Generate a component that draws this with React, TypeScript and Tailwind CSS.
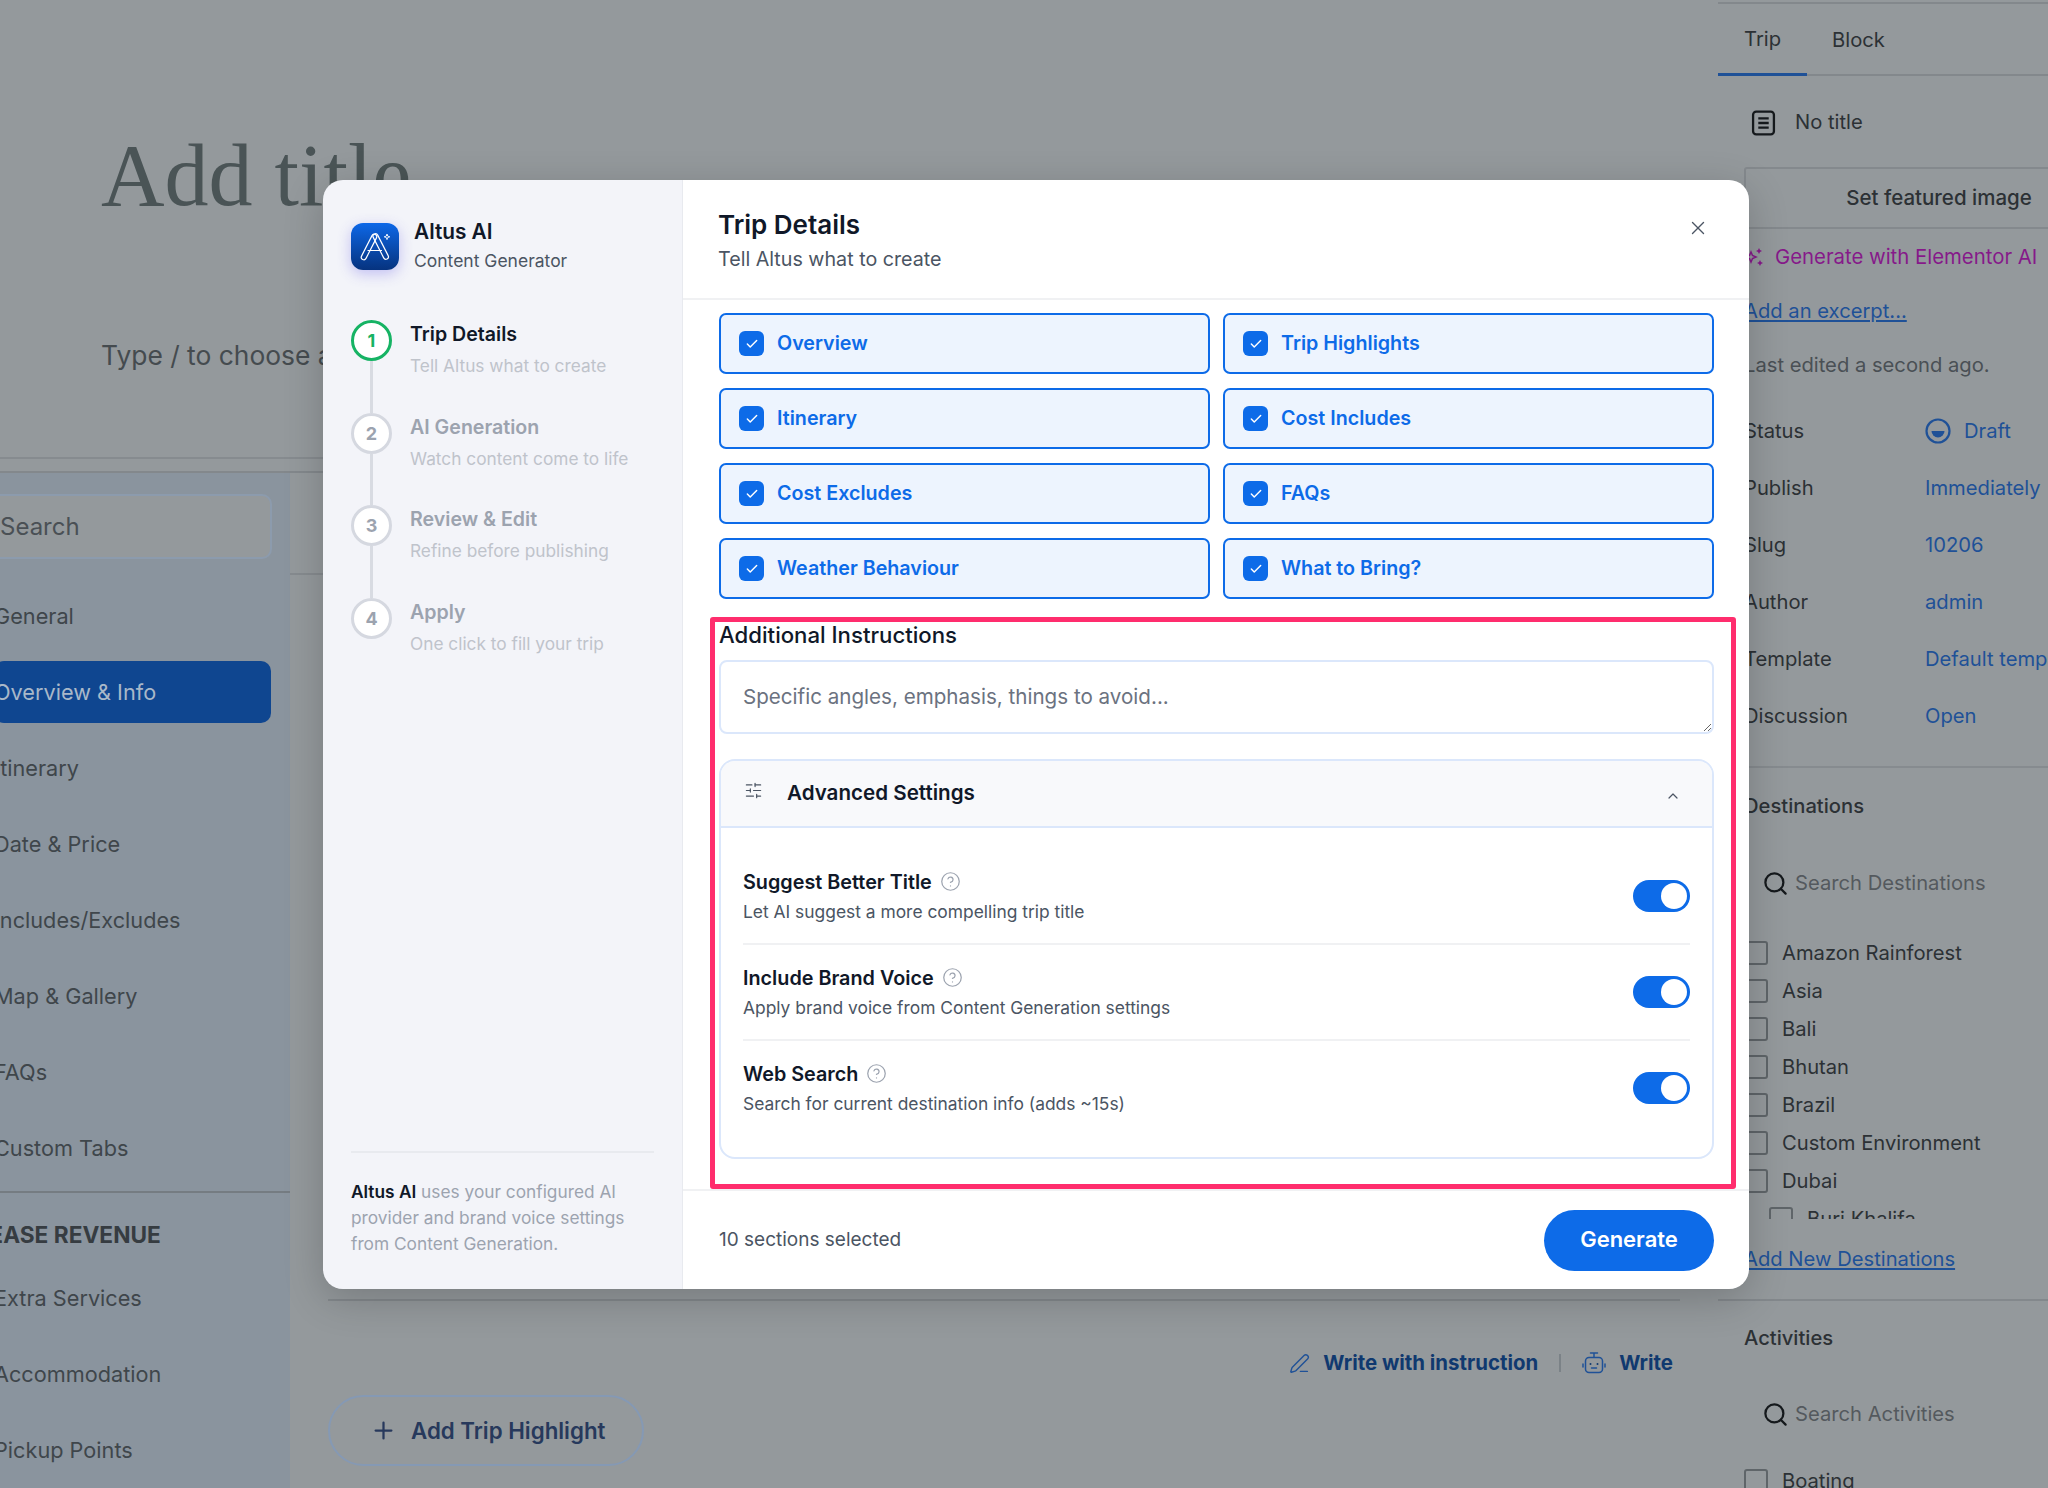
import { Check, ChevronUp, CircleHelp, PenLine, Plus, Search, SlidersHorizontal, X } from "lucide-react";

const navTop = ["General", "Overview & Info", "Itinerary", "Date & Price", "Includes/Excludes", "Map & Gallery", "FAQs", "Custom Tabs"];
const navBottom = ["Extra Services", "Accommodation", "Pickup Points"];
const meta = [
  ["Status", "Draft"],
  ["Publish", "Immediately"],
  ["Slug", "10206"],
  ["Author", "admin"],
  ["Template", "Default template"],
  ["Discussion", "Open"],
];
const destinations = ["Amazon Rainforest", "Asia", "Bali", "Bhutan", "Brazil", "Custom Environment", "Dubai"];
const steps = [
  ["Trip Details", "Tell Altus what to create"],
  ["AI Generation", "Watch content come to life"],
  ["Review & Edit", "Refine before publishing"],
  ["Apply", "One click to fill your trip"],
];
const sections = ["Overview", "Trip Highlights", "Itinerary", "Cost Includes", "Cost Excludes", "FAQs", "Weather Behaviour", "What to Bring?"];
const settings = [
  ["Suggest Better Title", "Let AI suggest a more compelling trip title"],
  ["Include Brand Voice", "Apply brand voice from Content Generation settings"],
  ["Web Search", "Search for current destination info (adds ~15s)"],
];

// Altus logo mark: outlined A with a small sparkle
const AltusLogo = () => (
  <svg viewBox="0 0 48 47" className="h-full w-full" fill="none" stroke="white" strokeWidth="1.2">
    <rect x="15.5" y="10" width="5" height="28" rx="2.5" transform="rotate(27 18 24)" />
    <rect x="27.2" y="9.5" width="5" height="28" rx="2.5" transform="rotate(-27 29.7 23.5)" />
    <path d="M16.5 27.5h14.5" />
    <path d="M36 11l.7 2.1 2.1.7-2.1.7-.7 2.1-.7-2.1-2.1-.7 2.1-.7z" strokeWidth="0.9" />
  </svg>
);

const RobotIcon = () => (
  <svg width="24" height="24" viewBox="0 0 24 24" fill="none" stroke="#1f5197" strokeWidth="1.5" strokeLinecap="round">
    <path d="M8.5 2h7M12 2v4" />
    <rect x="3.5" y="6.5" width="17" height="15" rx="3.5" />
    <path d="M1 13v3M23 13v3M9.5 17h5" />
    <circle cx="8.5" cy="13" r="1" fill="#10396f" stroke="none" />
    <circle cx="15.5" cy="13" r="1" fill="#10396f" stroke="none" />
  </svg>
);

const ElementorSparkle = () => (
  <svg width="20" height="20" viewBox="0 0 20 20" fill="none" className="shrink-0">
    <path d="M6 5l1.5 3.5L11 10l-3.5 1.5L6 15l-1.5-3.5L1 10l3.5-1.5z" stroke="#86198a" strokeWidth="1.5" />
    <path d="M14 1l1 2 2 1-2 1-1 2-1-2-2-1 2-1zM15 13l1 2 2 1-2 1-1 2-1-2-2-1 2-1z" fill="#86198a" />
  </svg>
);

const PageBackground = () => (
  <div className="flex h-full w-full text-[#2c3135]">
    <div className="flex w-[1718px] flex-col">
      <div className="h-[459px] border-b-2 border-[#868b8f] pl-[101px]">
        <div className="pt-[126px] font-['Liberation_Serif',serif] text-[88px] leading-[100px] text-[#4a5456]">Add title</div>
        <div className="mt-[110px] text-[26.4px] leading-[38px] text-[#454b4f]">Type / to choose a block</div>
      </div>
      <div className="h-[12px]" />
      <div className="flex flex-1 border-t-2 border-[#83888c]">
        <div className="w-[290px] overflow-hidden bg-[#8a949e] text-[21.7px] text-[#3f464b]">
          <div className="mt-[21px] ml-[-20px] flex h-[65px] w-[292px] items-center rounded-[10px] border-2 border-[#8c9bad] bg-[#94999c] pl-[18px] text-[24px] text-[#4a5055]">
            Search
          </div>
          <div className="mt-[26px] flex flex-col gap-[14px]">
            {navTop.map((item) => (
              <div
                key={item}
                className={`ml-[-6px] flex h-[62px] w-[277px] items-center rounded-[10px] ${item === "Overview & Info" ? "bg-[#0f4690] text-[#a9b8c9]" : ""}`}
              >
                {item}
              </div>
            ))}
          </div>
          <div className="mt-[12px] border-t-2 border-[#757c82]" />
          <div className="mt-[27px] ml-[-66px] text-[22.7px] leading-[30px] font-bold whitespace-nowrap text-[#363c41]">INCREASE REVENUE</div>
          <div className="mt-[17px] flex flex-col gap-[14px]">
            {navBottom.map((item) => (
              <div key={item} className="ml-[-6px] flex h-[62px] items-center">{item}</div>
            ))}
          </div>
        </div>
        <div className="flex-1 px-[38px]">
          <div className="mx-[-38px] h-[102px] border-b-2 border-[#868b8f]" />
          <div className="mt-[724px] border-b-2 border-[#83888c]" />
          <div className="mt-[44px] flex h-[36px] items-center justify-end gap-[13px] pr-[7px] text-[20.4px] font-bold text-[#10396f]">
            <PenLine size={21} strokeWidth={1.6} className="text-[#1f5197]" />
            <span>Write with instruction</span>
            <span className="mx-[8px] h-[18px] w-[2px] bg-[#7b8287]" />
            <RobotIcon />
            <span>Write</span>
          </div>
          <div className="mt-[14px] flex h-[71px] w-[316px] items-center gap-[14px] rounded-full border-2 border-[#8599b4] pl-[40px] text-[22.3px] font-semibold text-[#27395c]">
            <Plus size={27} strokeWidth={2} />
            Add Trip Highlight
          </div>
        </div>
      </div>
    </div>

    <div className="w-[330px] text-[20.2px]">
      <div className="mt-[2px] border-t-2 border-[#83888c]" />
      <div className="flex h-[72px] border-b-2 border-[#83888c]">
        <div className="mb-[-2px] flex items-center border-b-[3px] border-[#1f5197] px-[26px] pt-[2px]">Trip</div>
        <div className="flex items-center pt-[2px] pl-[25px]">Block</div>
      </div>
      <div className="px-[26px]">
        <div className="flex h-[91px] items-center gap-[19px] pt-[2px] pl-[7px]">
          <svg width="25" height="28" viewBox="0 0 24 26" fill="none" stroke="#15191c" strokeWidth="2.2">
            <rect x="2" y="2" width="20" height="22" rx="3" />
            <path d="M7 8.5h10M7 13h10M7 17.5h10" />
          </svg>
          No title
        </div>
        <div className="flex h-[62px] w-[390px] items-center justify-center rounded-[3px] border-2 border-[#84898d] text-[20.5px] font-medium">
          Set featured image
        </div>
        <div className="flex h-[56px] items-center gap-[10px] pl-[1px] text-[20.35px] whitespace-nowrap text-[#86198a]">
          <ElementorSparkle />
          Generate with Elementor AI
        </div>
        <div className="flex h-[52px] items-center text-[#1f5197] underline">Add an excerpt...</div>
        <div className="flex h-[56px] items-center text-[#4a5055]">Last edited a second ago.</div>
        <div className="mt-[10px]">
          {meta.map(([label, value]) => (
            <div key={label} className="flex h-[57px] items-center">
              <span className="w-[181px] shrink-0">{label}</span>
              <span className="flex items-center gap-[13px] whitespace-nowrap text-[#1f5197]">
                {label === "Status" && (
                  <svg width="26" height="26" viewBox="0 0 26 26" fill="none">
                    <circle cx="13" cy="13" r="11.5" stroke="#1f5197" strokeWidth="2.2" />
                    <path d="M6.5 13h13a6.5 6.5 0 0 1-13 0z" fill="#1f5197" />
                  </svg>
                )}
                {value}
              </span>
            </div>
          ))}
        </div>
      </div>
      <div className="mt-[21px] border-t-2 border-[#868b8f]" />
      <div className="px-[26px]">
        <div className="flex h-[76px] items-center font-medium">Destinations</div>
        <div className="flex h-[78px] items-center gap-[6px] pl-[18px] text-[#54595e]">
          <Search size={27} strokeWidth={2} className="text-[#15191c]" />
          Search Destinations
        </div>
        <div className="mt-[12px] h-[285px] overflow-hidden">
          {destinations.map((d) => (
            <div key={d} className="flex h-[38px] items-center gap-[14px]">
              <span className="h-[24px] w-[24px] rounded-[3px] border-2 border-[#5f6569]" />
              {d}
            </div>
          ))}
          <div className="flex h-[38px] items-center gap-[14px] pl-[25px]">
            <span className="h-[24px] w-[24px] rounded-[3px] border-2 border-[#5f6569]" />
            Burj Khalifa
          </div>
        </div>
        <div className="flex h-[80px] items-center text-[#1f5197] underline">Add New Destinations</div>
      </div>
      <div className="border-t-2 border-[#83888c]" />
      <div className="px-[26px]">
        <div className="flex h-[75px] items-center font-medium">Activities</div>
        <div className="flex h-[76px] items-center gap-[6px] pl-[18px] text-[#54595e]">
          <Search size={27} strokeWidth={2} className="text-[#15191c]" />
          Search Activities
        </div>
        <div className="flex h-[38px] items-center gap-[14px] pt-[20px]">
          <span className="h-[24px] w-[24px] rounded-[3px] border-2 border-[#5f6569]" />
          Boating
        </div>
      </div>
    </div>
  </div>
);

const Toggle = () => (
  <div className="flex h-[32px] w-[57px] shrink-0 items-center justify-end rounded-full bg-[#0d6be8] pr-[3px]">
    <div className="h-[26px] w-[26px] rounded-full bg-white" />
  </div>
);

const LeftPane = () => (
  <aside className="flex w-[360px] shrink-0 flex-col border-r border-[#e8eaef] bg-[#f3f4f9] px-[28px]">
    <div className="flex gap-[15px] pt-[43px]">
      <div className="h-[47px] w-[48px] shrink-0 rounded-[12px] bg-gradient-to-b from-[#0d68e8] to-[#06337f] shadow-[0_4px_14px_rgba(80,70,230,0.3)]">
        <AltusLogo />
      </div>
      <div>
        <div className="mt-[-1px] text-[20.8px] leading-[20px] font-semibold text-[#101828]">Altus AI</div>
        <div className="mt-[8px] text-[17.5px] leading-[21px] text-[#4b5563]">Content Generator</div>
      </div>
    </div>
    <div className="mt-[49px]">
      {steps.map(([title, sub], i) => (
        <div key={title} className="flex h-[92.6px] gap-[18px]">
          <div className="flex w-[41px] shrink-0 flex-col items-center">
            <div
              className={`flex h-[41px] w-[41px] shrink-0 items-center justify-center rounded-full border-[3px] bg-white text-[18px] font-bold ${i === 0 ? "border-[#16b364] text-[#16b364]" : "border-[#d5d8e0] text-[#9ca3af]"}`}
            >
              {i + 1}
            </div>
            {i < 3 && <div className="w-[3px] flex-1 bg-[#d8dbe2]" />}
          </div>
          <div>
            <div className={`text-[19.6px] leading-[28px] font-semibold ${i === 0 ? "text-[#101828]" : "text-[#9ca3af]"}`}>{title}</div>
            <div className="mt-[6px] text-[17.3px] leading-[24px] text-[#bfc3cb]">{sub}</div>
          </div>
        </div>
      ))}
    </div>
    <div className="mt-auto border-t-2 border-[#e8eaef] pt-[26px] pb-[32px] text-[17.3px] leading-[26px] text-[#9ca3af]">
      <span className="font-semibold text-[#101828]">Altus AI</span> uses your configured AI provider and brand voice settings from Content Generation.
    </div>
  </aside>
);

const RightPane = () => (
  <section className="flex min-w-0 flex-1 flex-col bg-white">
    <header className="flex h-[120px] shrink-0 justify-between border-b-2 border-[#f0f1f3] pr-[35px] pl-[36px]">
      <div className="pt-[27px]">
        <div className="ml-[-1px] text-[26px] leading-[36px] font-semibold text-[#101828]">Trip Details</div>
        <div className="mt-[2px] ml-[-1px] text-[19.7px] leading-[28px] text-[#4b5563]">Tell Altus what to create</div>
      </div>
      <X size={22} strokeWidth={1.5} className="mt-[37px] mr-[5px] text-[#4b5563]" />
    </header>
    <div className="pr-[35px] pl-[36px]">
      <div className="mt-[13px] grid grid-cols-2 gap-x-[13px] gap-y-[14px]">
        {sections.map((s) => (
          <div key={s} className="flex h-[61px] items-center gap-[13px] rounded-[7px] border-[2.5px] border-[#0d6be8] bg-[#edf4fe] pl-[18px] text-[19.7px] font-semibold text-[#0d6be8]">
            <span className="flex h-[25px] w-[25px] items-center justify-center rounded-[6px] bg-[#0d6be8]">
              <Check size={14} strokeWidth={2.5} className="text-white" />
            </span>
            {s}
          </div>
        ))}
      </div>
      <div className="mt-[23px] text-[22.2px] leading-[26px] font-medium text-[#101828]">Additional Instructions</div>
      <textarea
        readOnly
        placeholder="Specific angles, emphasis, things to avoid..."
        className="mt-[12px] block h-[74px] w-full rounded-[8px] border-2 border-[#dbe7fb] px-[22px] py-[21px] text-[20.6px] leading-[28px] outline-none placeholder:text-[#6b7280]"
      />
      <div className="mt-[25px] overflow-hidden rounded-[16px] border-2 border-[#dbe7fb]">
        <div className="flex h-[67px] items-center border-b-2 border-[#dbe7fb] bg-[#f8f9fb] pr-[31px] pl-[23px]">
          <SlidersHorizontal size={19} strokeWidth={1.5} className="mt-[-6px] text-[#4b5563]" />
          <span className="ml-[24px] text-[20.6px] font-semibold text-[#101828]">Advanced Settings</span>
          <ChevronUp size={16} strokeWidth={1.8} className="mt-[4px] ml-auto text-[#4b5563]" />
        </div>
        <div className="px-[22px] pt-[21px] pb-[22px]">
          {settings.map(([title, sub], i) => (
            <div key={title} className={`flex items-center justify-between ${i < 2 ? "h-[96px] border-b-2 border-[#f0f1f3]" : "h-[94px]"}`}>
              <div>
                <div className="flex items-center gap-[8px] text-[19.8px] leading-[26px] font-semibold text-[#101828]">
                  {title}
                  <CircleHelp size={21} strokeWidth={1.4} className="text-[#9ca3af]" />
                </div>
                <div className="mt-[5px] text-[17.4px] leading-[24px] text-[#4b5563]">{sub}</div>
              </div>
              <Toggle />
            </div>
          ))}
        </div>
      </div>
    </div>
    <footer className="mt-auto flex h-[100px] items-center justify-between border-t-2 border-[#f0f1f3] pr-[35px] pl-[36px]">
      <span className="text-[19px] text-[#4b5563]">10 sections selected</span>
      <button className="h-[61px] w-[170px] rounded-full bg-[#0d6be8] pb-[2px] text-[22px] font-semibold text-white">Generate</button>
    </footer>
  </section>
);

export default function App() {
  return (
    <div className="relative h-[1488px] w-[2048px] overflow-hidden bg-[#94999c] font-['Inter',sans-serif]">
      <PageBackground />
      <div className="absolute top-[180px] left-[323px] flex h-[1109px] w-[1426px] overflow-hidden rounded-[20px] shadow-[0_10px_40px_rgba(0,0,0,0.2)]">
        <LeftPane />
        <RightPane />
      </div>
      {/* pink annotation around the lower part of the form */}
      <div className="pointer-events-none absolute top-[617px] left-[710px] h-[572px] w-[1026px] rounded-[3px] border-[5px] border-[#ff2d6d]" />
    </div>
  );
}
